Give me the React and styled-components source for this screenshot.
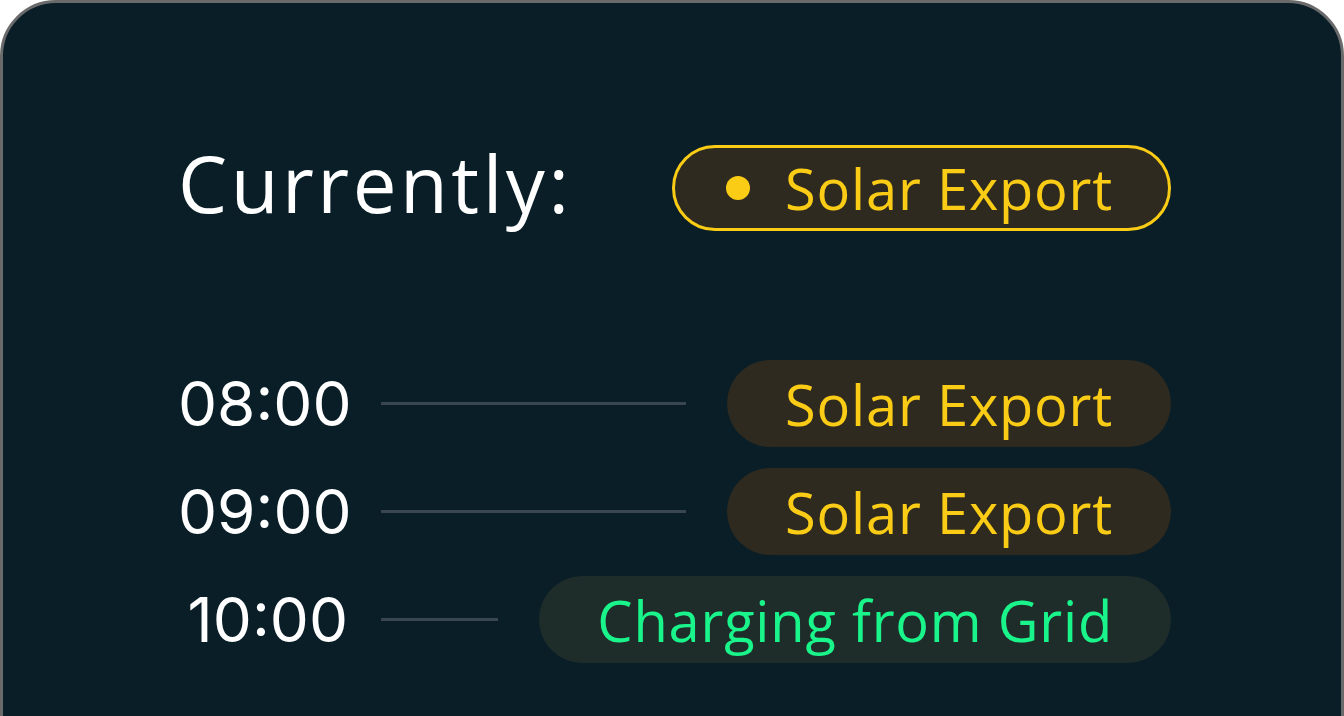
import React from "react";
import styled, { createGlobalStyle } from "styled-components";

const GlobalStyle = createGlobalStyle`
  html, body {
    margin: 0;
    padding: 0;
    background: #ffffff;
    overflow: hidden;
  }
`;

const schedule = [
  { time: "08:00", label: "Solar Export", kind: "solar" },
  { time: "09:00", label: "Solar Export", kind: "solar" },
  { time: "10:00", label: "Charging from Grid", kind: "grid" },
];

const tones = {
  solar: { bg: "#2e2a1f", fg: "#facc15" },
  grid: { bg: "#1f2d2a", fg: "#19f58a" },
};

const App = () => {
  return (
    <>
      <GlobalStyle />
      <Card>
        <Header>
          <Title>Currently:</Title>
          <StatusPill>
            <Dot />
            Solar Export
          </StatusPill>
        </Header>
        <Timeline>
          {schedule.map((row) => (
            <Row key={row.time}>
              <Time>{row.time}</Time>
              <Rule />
              <Pill tone={row.kind}>{row.label}</Pill>
            </Row>
          ))}
        </Timeline>
      </Card>
    </>
  );
};

export default App;

const Card = styled.div`
  box-sizing: border-box;
  width: 1344px;
  height: 780px;
  background: #0a1e28;
  border: 3px solid #6a6a6a;
  border-radius: 56px;
  padding: 142px 170px 0 175px;
  display: flex;
  flex-direction: column;
  gap: 129px;
`;

const Header = styled.div`
  display: flex;
  align-items: center;
  justify-content: space-between;
  height: 86px;
`;

const Title = styled.h1`
  margin: 0;
  padding-bottom: 10px;
  font-family: "Open Sans", sans-serif;
  font-weight: 500;
  font-size: 78px;
  letter-spacing: 3.5px;
  color: #ffffff;
  line-height: 1;
`;

const PillText = `
  font-family: "Open Sans", sans-serif;
  font-size: 56px;
  letter-spacing: 0.8px;
  line-height: 1;
`;

const StatusPill = styled.div`
  box-sizing: border-box;
  height: 86px;
  display: flex;
  align-items: center;
  gap: 35px;
  padding: 0 55px 0 51px;
  background: #2e2a1f;
  border: 3px solid #facc15;
  border-radius: 43px;
  color: #facc15;
  ${PillText}
`;

const Dot = styled.span`
  width: 24px;
  height: 24px;
  border-radius: 50%;
  background: #facc15;
`;

const Timeline = styled.div`
  display: flex;
  flex-direction: column;
  gap: 21px;
`;

const Row = styled.div`
  display: flex;
  align-items: center;
  height: 87px;
`;

const Time = styled.span`
  width: 170px;
  text-align: right;
  font-family: Inter, sans-serif;
  font-size: 62px;
  color: #ffffff;
  line-height: 1;
`;

const Rule = styled.span`
  flex: 1;
  height: 3px;
  margin: 0 41px 0 33px;
  background: #3a4552;
`;

const Pill = styled.span`
  box-sizing: border-box;
  height: 87px;
  display: flex;
  align-items: center;
  padding: 0 58px;
  border-radius: 44px;
  background: ${(p) => tones[p.tone].bg};
  color: ${(p) => tones[p.tone].fg};
  ${PillText}
`;
